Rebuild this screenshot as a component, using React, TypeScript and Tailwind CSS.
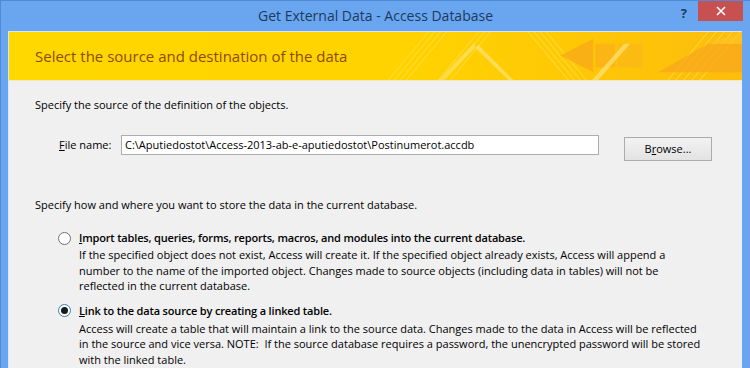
import React from 'react';

const font = { fontFamily: '"Open Sans", "Noto Sans", sans-serif' };

const HeaderArt: React.FC = () => (
  <svg className="absolute inset-0 h-full w-full" viewBox="0 0 734 49" preserveAspectRatio="none">
    <defs>
      <linearGradient id="hdr" x1="0" y1="0" x2="1" y2="0">
        <stop offset="0" stopColor="#ffd800" />
        <stop offset="0.55" stopColor="#ffd200" />
        <stop offset="1" stopColor="#fdbd0c" />
      </linearGradient>
    </defs>
    <rect width="734" height="49" fill="url(#hdr)" />
    {/* diagonal stripes */}
    <g stroke="#ffe65a" strokeWidth="1" opacity="0.7">
      <line x1="380" y1="49" x2="420" y2="0" />
      <line x1="386" y1="49" x2="426" y2="0" />
      <line x1="392" y1="49" x2="432" y2="0" />
      <line x1="398" y1="49" x2="438" y2="0" />
      <line x1="430" y1="49" x2="470" y2="0" />
      <line x1="436" y1="49" x2="476" y2="0" />
      <line x1="442" y1="49" x2="482" y2="0" />
      <line x1="520" y1="0" x2="560" y2="49" />
      <line x1="526" y1="0" x2="566" y2="49" />
      <line x1="532" y1="0" x2="572" y2="49" />
      <line x1="538" y1="0" x2="578" y2="49" />
      <line x1="660" y1="49" x2="700" y2="0" />
      <line x1="668" y1="49" x2="708" y2="0" />
      <line x1="676" y1="49" x2="716" y2="0" />
      <line x1="684" y1="49" x2="724" y2="0" />
      <line x1="692" y1="49" x2="732" y2="0" />
    </g>
    {/* orange arrow */}
    <polygon points="552,24 585,7 585,41" fill="#f7a81b" opacity="0.75" />
    <rect x="587" y="12" width="20" height="24" fill="#f9ae1a" opacity="0.7" />
    <rect x="609" y="12" width="26" height="24" fill="#fab51a" opacity="0.6" />
    <polygon points="584,49 616,12 622,12 590,49" fill="#ffe27a" opacity="0.7" />
    <polygon points="470,13 505,49 500,49 467,16" fill="#ffe27a" opacity="0.7" />
    <polygon points="467,16 435,49 430,49 466,11" fill="#ffe27a" opacity="0.6" />
    {/* lower right orange band */}
    <polygon points="650,41 700,12 734,12 734,41" fill="#f6a51c" opacity="0.7" />
    <polygon points="700,12 734,0 734,12" fill="#fcc32a" opacity="0.6" />
  </svg>
);

const App: React.FC = () => {
  return (
    <div
      className="flex h-[368px] w-[750px] flex-col overflow-hidden border-l border-t border-[#4f8ad8] bg-[#6aa6f0]"
      style={font}
    >
      {/* Title bar */}
      <div className="relative flex h-[30px] shrink-0 items-center justify-center pb-px">
        <span className="text-[14px] text-[#1b3a5e]">Get External Data - Access Database</span>
        <span className="absolute right-[63px] top-[3px] text-[13px] font-bold text-[#1b3a5e]">?</span>
        <div className="absolute right-[7px] top-[-1px] flex h-[21px] w-[45px] items-center justify-center bg-[#c75050]">
          <svg width="10" height="10" viewBox="0 0 10 10">
            <path d="M1 1 L9 9 M9 1 L1 9" stroke="#ffffff" strokeWidth="1.6" />
          </svg>
        </div>
      </div>

      {/* Client area */}
      <div className="ml-[7px] mr-[8px] flex flex-1 flex-col border-l border-t border-[#d9e7f8] bg-[#f0f0f0]">
        {/* Yellow banner */}
        <div className="relative h-[49px] shrink-0 border-b border-[#f4e8c0]">
          <HeaderArt />
          <div className="relative flex h-full items-center pl-[26px] text-[15px] text-[#8c4b00]">
            Select the source and destination of the data
          </div>
        </div>

        {/* Body */}
        <div className="flex flex-col px-[26px] pt-[16px] text-[11px] leading-[16px] text-black">
          <p>Specify the source of the definition of the objects.</p>

          <div className="mt-[22px] flex items-start">
            <span className="ml-[24px] mt-[2px] w-[62px]">
              <span className="underline">F</span>ile name:
            </span>
            <div className="flex h-[20px] w-[478px] items-center border border-[#abadb3] bg-white px-[3px]">
              C:\Aputiedostot\Access-2013-ab-e-aputiedostot\Postinumerot.accdb
            </div>
            <button className="ml-[25px] mt-[2px] flex h-[24px] w-[88px] items-center justify-center border border-[#acacac] bg-gradient-to-b from-[#f2f2f2] to-[#e3e3e3]">
              B<span className="underline">r</span>owse...
            </button>
          </div>

          <p className="mt-[36px]">Specify how and where you want to store the data in the current database.</p>

          <div className="ml-[23px] mt-[17px] flex flex-col">
            <div className="flex items-center">
              <span className="mr-[8px] h-[13px] w-[13px] rounded-full border border-[#707070] bg-white" />
              <span className="font-semibold tracking-[-0.17px]">
                <span className="underline">I</span>mport tables, queries, forms, reports, macros, and modules into the current database.
              </span>
            </div>
            <p className="ml-[21px] mt-px leading-[15.5px]">
              If the specified object does not exist, Access will create it. If the specified object already exists, Access will append a<br />
              number to the name of the imported object. Changes made to source objects (including data in tables) will not be<br />
              reflected in the current database.
            </p>

            <div className="mt-[9px] flex items-center">
              <span className="mr-[8px] flex h-[13px] w-[13px] items-center justify-center rounded-full border border-[#3c7fb1] bg-white">
                <span className="h-[7px] w-[7px] rounded-full bg-[#1a1a1a]" />
              </span>
              <span className="font-semibold tracking-[-0.17px]">
                <span className="underline">L</span>ink to the data source by creating a linked table.
              </span>
            </div>
            <p className="ml-[21px] mt-[2px] leading-[15.5px]">
              Access will create a table that will maintain a link to the source data. Changes made to the data in Access will be reflected<br />
              in the source and vice versa. NOTE:&nbsp; If the source database requires a password, the unencrypted password will be stored<br />
              with the linked table.
            </p>
          </div>
        </div>
      </div>
    </div>
  );
};

export default App;
